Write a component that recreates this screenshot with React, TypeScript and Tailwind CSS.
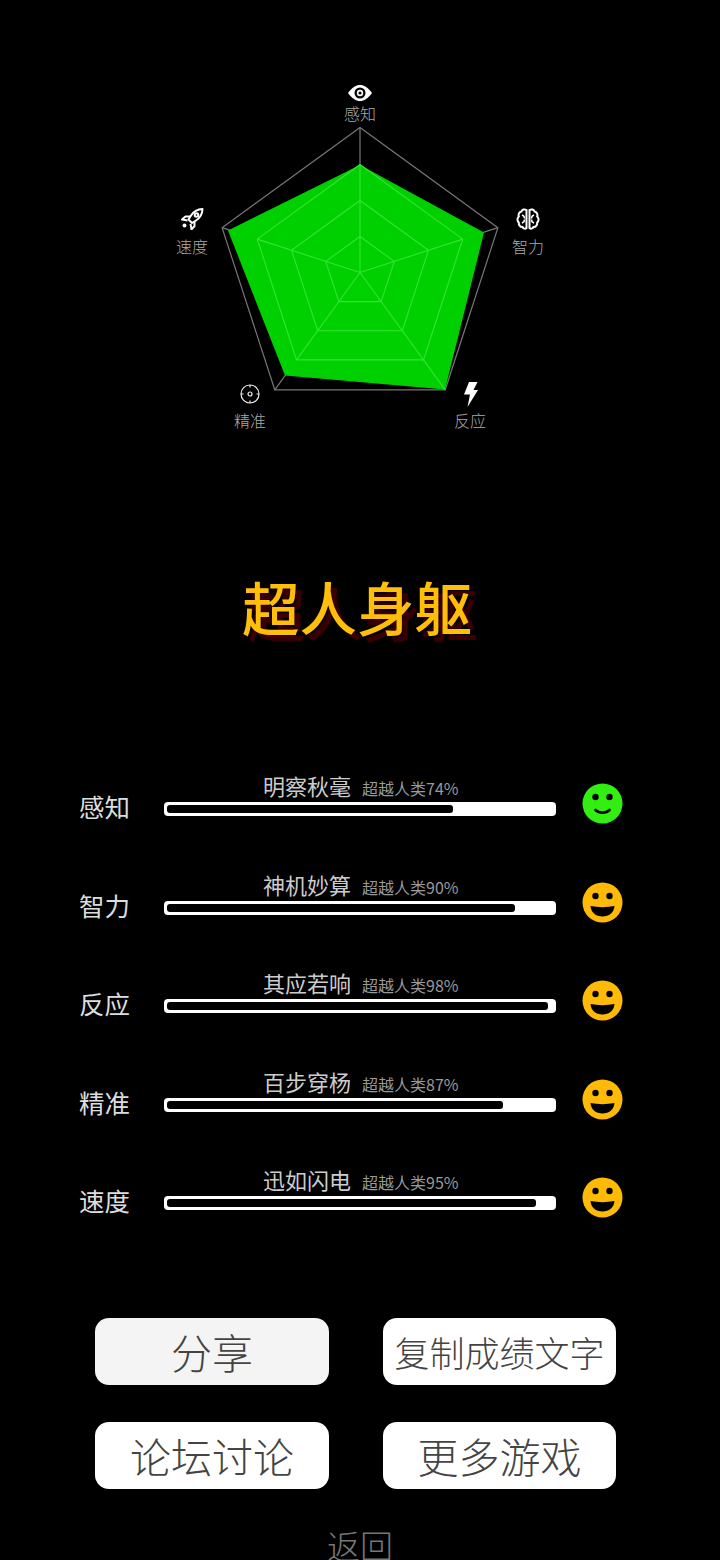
type StatRow = {
  label: string;
  title: string;
  percent: number;
  fill: number;
  happy: boolean;
};

// fill is the black part of the bar, in px of its 386px inside
const stats: StatRow[] = [
  { label: '感知', title: '明察秋毫', percent: 74, fill: 286, happy: false },
  { label: '智力', title: '神机妙算', percent: 90, fill: 348, happy: true },
  { label: '反应', title: '其应若响', percent: 98, fill: 381, happy: true },
  { label: '精准', title: '百步穿杨', percent: 87, fill: 336, happy: true },
  { label: '速度', title: '迅如闪电', percent: 95, fill: 369, happy: true },
];

const CX = 360;
const CY = 272.5;

// pentagon corner at a given radius, starting from the top, clockwise
const corner = (i: number, r: number) => {
  const a = (-90 + i * 72) * (Math.PI / 180);
  return [CX + r * Math.cos(a), CY + r * Math.sin(a)];
};

const ring = (r: number) => [0, 1, 2, 3, 4].map((i) => corner(i, r).join(',')).join(' ');

const Radar = () => (
  <svg width="720" height="440" viewBox="0 0 720 440" className="block">
    <polygon points={ring(145)} fill="none" stroke="#777" strokeWidth="1.2" />
    {[0, 1, 2, 3, 4].map((i) => {
      const [x, y] = corner(i, 145);
      return <line key={i} x1={CX} y1={CY} x2={x} y2={y} stroke="#777" strokeWidth="1.2" />;
    })}
    <polygon points="360,165 484,232.5 445,389.5 285,375.5 228,230.5" fill="#00d000" />
    {[36, 72, 108].map((r) => (
      <polygon key={r} points={ring(r)} fill="none" stroke="#33e433" strokeWidth="1.1" />
    ))}
    {[0, 1, 2, 3, 4].map((i) => {
      const [x, y] = corner(i, i === 2 ? 145 : 108);
      return <line key={i} x1={CX} y1={CY} x2={x} y2={y} stroke="#33e433" strokeWidth="1.1" />;
    })}
  </svg>
);

const EyeIcon = () => (
  <svg width="26" height="18" viewBox="0 0 26 18">
    <path d="M1 9C5 3.500 9 1 13 1s8 2.500 12 8c-4 5.500-8 8-12 8S5 14.500 1 9z" fill="#fff" />
    <circle cx="13" cy="9" r="5.500" fill="#000" />
    <circle cx="13" cy="9" r="3.200" fill="#fff" />
    <circle cx="13" cy="9" r="1.600" fill="#000" />
  </svg>
);

const BrainIcon = () => (
  <svg width="24" height="22" viewBox="0 0 24 22" fill="none" stroke="#fff" strokeWidth="2">
    <path d="M10.500 2C8.500.8 6 1.500 5.500 3.500 3 4 2 6.500 2.800 8.500 1 10 1 13 2.800 14.500 2.500 17 4.500 19.500 6.500 19 7.500 21 9.500 21 10.500 20z" />
    <path d="M13.500 2c2-1.200 4.500-.5 5 1.500 2.500.5 3.500 3 2.700 5 1.800 1.500 1.800 4.500 0 6 .3 2.500-1.700 5-3.700 4.500-1 2-3 2-4 1z" />
    <path d="M6 7c1.500.5 2.500 1.500 2.500 3.500M6 15c1.500-.5 2.500-1.500 2.500-3.500M18 7c-1.500.5-2.500 1.500-2.500 3.500M18 15c-1.500-.5-2.500-1.500-2.500-3.500" strokeWidth="1.500" />
  </svg>
);

const RocketIcon = () => (
  <svg width="24" height="22" viewBox="0 0 24 22" fill="none" stroke="#fff" strokeWidth="2" strokeLinejoin="round">
    <path d="M22.500 1c-5 .2-9 2.500-11.500 6.500L8.500 11.500l3.500 3.500 4-2.500C20 10 22.300 6 22.500 1z" />
    <path d="M10 8.500H5.500L2 11.500l5.500 1M14.500 13.500V18l-3 3.500-1-5.500" />
    <circle cx="16.500" cy="7" r="1.800" />
    <circle cx="4.500" cy="17.500" r="2" fill="#fff" stroke="none" />
  </svg>
);

const TargetIcon = () => (
  <svg width="20" height="20" viewBox="0 0 20 20" fill="none" stroke="#eee" strokeWidth="1.200">
    <circle cx="10" cy="10" r="9" />
    <circle cx="10" cy="10" r="2" />
    <path d="M10 1v2.500M10 16.500V19M1 10h2.500M16.500 10H19" />
  </svg>
);

const BoltIcon = () => (
  <svg width="15" height="25" viewBox="0 0 15 25">
    <polygon points="6,0 14.500,0 10.500,8 15,8 4.500,25 7,12.500 1,12.500" fill="#fff" />
  </svg>
);

const Smiley = ({ happy }: { happy: boolean }) => (
  <svg width="41" height="41" viewBox="0 0 41 41" className="block">
    <circle cx="20.500" cy="20.500" r="20" fill={happy ? '#ffba08' : '#33ee11'} />
    <circle cx="13.500" cy="14" r="3.200" fill="#000" />
    <circle cx="27.500" cy="14" r="3.200" fill="#000" />
    {happy ? (
      <path d="M8.500 24c7.500 1.500 16.500 1.500 24 0C32 30.500 27 34.500 20.500 34.500S9 30.500 8.500 24z" fill="#000" />
    ) : (
      <path d="M13.500 27c3.500 3.500 10.500 3.500 14 0" fill="none" stroke="#000" strokeWidth="2.600" strokeLinecap="round" />
    )}
  </svg>
);

const RadarLabel = ({
  className,
  textClass,
  text,
  children,
}: {
  className: string;
  textClass: string;
  text: string;
  children: React.ReactNode;
}) => (
  <div className={`absolute flex w-[60px] flex-col items-center ${className}`}>
    <div className="flex h-[26px] items-center justify-center">{children}</div>
    <span className={`text-[16px] font-light leading-[20px] text-[#aaa] ${textClass}`}>{text}</span>
  </div>
);

const StatLine = ({ stat }: { stat: StatRow }) => (
  <div className="flex h-[98.500px] items-start pl-[79px]">
    <span className="mt-[19px] w-[85px] text-[25.500px] leading-[26px] text-[#ddd]">{stat.label}</span>
    <div className="w-[392px]">
      <div className="flex h-[28px] items-start gap-[11px] pl-[99px]">
        <span className="text-[22px] leading-[22px] text-[#ccc]">{stat.title}</span>
        <span className="mt-[4px] text-[16px] leading-[20px] text-[#999]">超越人类{stat.percent}%</span>
      </div>
      <div className="h-[14px] rounded-[4px] bg-white p-[3px]">
        <div className="h-[8px] rounded-[3px] bg-black" style={{ width: stat.fill }} />
      </div>
    </div>
    <div className="ml-[26px] mt-[9px]">
      <Smiley happy={stat.happy} />
    </div>
  </div>
);

const ActionButton = ({ text, className }: { text: string; className: string }) => (
  <button className={`flex h-[67px] items-center justify-center rounded-[14px] font-extralight leading-none text-[#444] ${className}`}>
    {text}
  </button>
);

const App = () => {
  return (
    <div className="h-[1560px] w-[720px] overflow-hidden bg-black font-['Noto_Sans_CJK_SC','Noto_Sans',sans-serif]">
      <div className="relative h-[440px]">
        <Radar />
        <RadarLabel className="left-[330px] top-[80px]" textClass="-mt-[3px]" text="感知">
          <EyeIcon />
        </RadarLabel>
        <RadarLabel className="left-[498px] top-[206px]" textClass="mt-[4px]" text="智力">
          <BrainIcon />
        </RadarLabel>
        <RadarLabel className="left-[440px] top-[381px]" textClass="mt-[3px]" text="反应">
          <BoltIcon />
        </RadarLabel>
        <RadarLabel className="left-[220px] top-[381px]" textClass="mt-[3px]" text="精准">
          <TargetIcon />
        </RadarLabel>
        <RadarLabel className="left-[162px] top-[206px]" textClass="mt-[4px]" text="速度">
          <RocketIcon />
        </RadarLabel>
      </div>

      <div className="flex h-[334px] items-start justify-center pt-[126px]">
        <h1 className="ml-[-6px] text-[57.500px] font-medium leading-[80px] text-[#ffbe0a] [text-shadow:6px_6px_1px_#3a0000]">超人身躯</h1>
      </div>

      <div className="h-[544px]">
        {stats.map((stat) => (
          <StatLine key={stat.label} stat={stat} />
        ))}
      </div>

      <div className="grid grid-cols-[234px_233px] gap-x-[54px] gap-y-[37px] pl-[95px]">
        <ActionButton text="分享" className="bg-[#f4f4f4] text-[41px]" />
        <ActionButton text="复制成绩文字" className="bg-white text-[35px]" />
        <ActionButton text="论坛讨论" className="bg-white text-[41px]" />
        <ActionButton text="更多游戏" className="bg-white text-[41px]" />
      </div>

      <div className="mt-[41px] text-center text-[33px] font-extralight leading-[30px] text-[#777]">返回</div>
    </div>
  );
};

export default App;
